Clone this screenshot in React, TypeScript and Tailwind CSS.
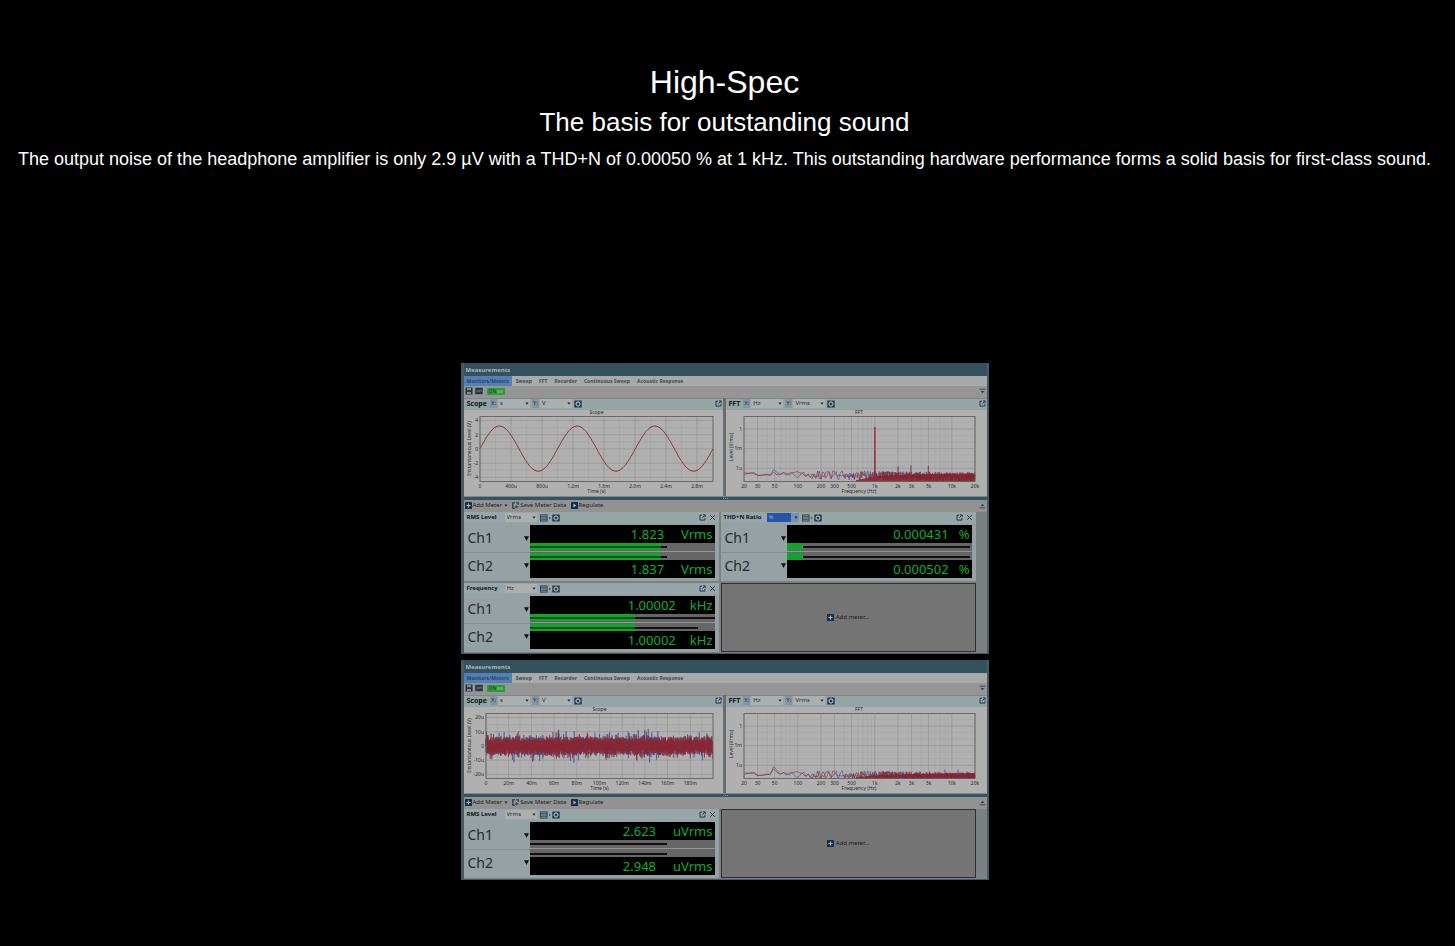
import React, { useId } from 'react';

const TABS = ['Monitors/Meters', 'Sweep', 'FFT', 'Recorder', 'Continuous Sweep', 'Acoustic Response'];

// small seeded generator so the traces are the same on every render
const createRandom = (seed: number) => {
  let s = seed;
  return () => {
    s = (s * 16807) % 2147483647;
    return s / 2147483647;
  };
};

const AXIS_FONT = 'fill-[#2b2b2b] text-[5px]';

const PlusIcon = () => (
  <svg viewBox="0 0 7 7" className="size-[7px] shrink-0">
    <rect width="7" height="7" rx="0.6" fill="#16304a" />
    <path d="M3.5 1.4v4.2M1.4 3.5h4.2" stroke="#a9b3b8" strokeWidth="1.2" />
  </svg>
);

const SaveDataIcon = () => (
  <svg viewBox="0 0 7 7" className="size-[7px] shrink-0" fill="none" stroke="#16304a">
    <path d="M3 .8H.8v5.4H3M4.2.8h2v2" strokeWidth="1.1" />
    <path d="M6.4 4.9H3.6M4.8 3.5 3.4 4.9l1.4 1.4" strokeWidth="0.9" />
  </svg>
);

const PlayIcon = () => (
  <svg viewBox="0 0 7 7" className="size-[7px] shrink-0">
    <rect width="7" height="7" rx="0.6" fill="#16304a" />
    <path d="M2.4 1.5 5.4 3.5l-3 2z" fill="#a9b3b8" />
  </svg>
);

const GearIcon = () => (
  <svg viewBox="0 0 8 8" className="size-[8px]">
    <rect x="0.3" y="0.5" width="7.4" height="7" rx="0.5" fill="#233848" />
    <circle cx="4" cy="4" r="1.9" fill="none" stroke="#a5b0b4" strokeWidth="1.1" />
    <path d="M4 1.2v1M4 5.8v1M1.2 4h1M5.8 4h1" stroke="#a5b0b4" strokeWidth="0.8" />
  </svg>
);

const ListIcon = () => (
  <svg viewBox="0 0 11 8" className="h-[8px] w-[11px]">
    <rect x="0.5" y="0.9" width="6.6" height="6.2" fill="#8d9ba0" stroke="#2b4050" strokeWidth="0.9" />
    <path d="M1 2.4h6M1 4h6M1 5.6h6" stroke="#2b4050" strokeWidth="0.7" />
    <path d="M8.6 3.6h2.2L9.7 4.9z" fill="#1d2c38" />
  </svg>
);

const PopOutIcon = () => (
  <svg viewBox="0 0 7 7" className="size-[7px]" fill="none" stroke="#26384c">
    <path d="M3 1.2H1v4.9h4.9V4" strokeWidth="1" />
    <path d="M4 .9h2.2v2.2M6 1.1 3.4 3.7" strokeWidth="1" />
  </svg>
);

const CloseIcon = () => (
  <svg viewBox="0 0 7 7" className="size-[7px]" stroke="#26323a" strokeWidth="1">
    <path d="m1.2 1.2 4.6 4.6M5.8 1.2 1.2 5.8" />
  </svg>
);

const DiskIcon = () => (
  <svg viewBox="0 0 8 8" className="size-[8px]">
    <path d="M.5.5h7v7h-7z" fill="#22323f" />
    <path d="M2 1h4v2.2H2zM2 5h4v2H2z" fill="#84898d" />
  </svg>
);

const CardIcon = () => (
  <svg viewBox="0 0 8 8" className="size-[8px]">
    <rect x="0.3" y="0.8" width="7.4" height="6.4" fill="#22323f" />
    <path d="M1.6 3.2h1.8v1.6H1.6M4.6 4.8V3.2h1.8v1.6" fill="none" stroke="#7c858b" strokeWidth="0.7" />
  </svg>
);

const CollapseIcon = ({ up = false }: { up?: boolean }) => (
  <svg viewBox="0 0 7 7" className={up ? 'size-[7px] rotate-180' : 'size-[7px]'}>
    <path d="M.6 1.2h5.8" stroke="#33414a" strokeWidth="0.9" />
    <path d="M1.6 2.9h3.8L3.5 5.3z" fill="#33414a" />
  </svg>
);

interface UnitSelectProps {
  id: string;
  value: string;
  active?: boolean;
}

const UnitSelect = ({ id, value, active }: UnitSelectProps) => (
  <div className="relative flex items-center">
    <select
      id={id}
      defaultValue={value}
      className={
        active
          ? 'h-[9px] w-[32px] appearance-none border-r-8 border-[#7591b5] bg-[#2357a6] pl-[2px] text-[6px] leading-[9px] text-[#8fb4e6]'
          : 'h-[9px] w-[32px] appearance-none bg-[#abafaf] pl-[2px] text-[6px] leading-[9px] text-[#2a2a2a]'
      }
    >
      <option>{value}</option>
    </select>
    <svg viewBox="0 0 4 3" className="pointer-events-none absolute right-px h-[3px] w-[4px]">
      <path d="M.4.5h3.2L2 2.7z" fill="#1d262b" />
    </svg>
  </div>
);

const AxisSelect = ({ label, value }: { label: string; value: string }) => {
  const id = useId();
  return (
    <div className="flex items-center gap-px">
      <label htmlFor={id} className="bg-[#8496a0] px-px text-[#27343b]">
        {label}
      </label>
      <UnitSelect id={id} value={value} />
    </div>
  );
};

const IconButton = ({ label, children }: { label: string; children: React.ReactNode }) => (
  <button type="button" aria-label={label} className="block">
    {children}
  </button>
);

interface GraphPaneProps {
  title: string;
  x: string;
  y: string;
  children: React.ReactNode;
}

const GraphPane = ({ title, x, y, children }: GraphPaneProps) => (
  <section className="min-w-0 bg-[#b0b0b0]">
    <header className="flex h-[12px] items-center gap-[2px] border-t border-[#7b8789] bg-[#96a4a6] pr-px pb-[2px] pl-[3px] text-[6px] leading-[9px]">
      <h3 className="pr-px text-[7px] font-bold text-[#0f1518]">{title}</h3>
      <AxisSelect label="X:" value={x} />
      <AxisSelect label="Y:" value={y} />
      <IconButton label="Graph settings">
        <GearIcon />
      </IconButton>
      <div className="ml-auto">
        <IconButton label="Pop out">
          <PopOutIcon />
        </IconButton>
      </div>
    </header>
    {children}
  </section>
);

interface ScopeGraphProps {
  left: number;
  yTicks: string[];
  xTicks: string[];
  xStep: number;
  children: React.ReactNode;
}

const TOP = 6.5;
const BOTTOM = 71.5;

const ScopeGraph = ({ left, yTicks, xTicks, xStep, children }: ScopeGraphProps) => (
  <svg viewBox="0 0 259 86" className="block w-full" role="img" aria-label="Scope">
    {xTicks.map((t, i) => (
      <g key={t}>
        <path d={`M${left + i * xStep} ${TOP}V${BOTTOM}`} stroke="#8e8e8e" strokeWidth="0.6" />
        <path d={`M${Math.min(left + (i + 0.5) * xStep, 249)} ${TOP}V${BOTTOM}`} stroke="#a2a2a2" strokeWidth="0.5" />
        <text x={left + i * xStep} y="78" textAnchor="middle" className={AXIS_FONT}>{t}</text>
      </g>
    ))}
    {yTicks.map((t, i) => (
      <g key={t}>
        <path d={`M${left} ${10.5 + i * 14.2}H249`} stroke="#8e8e8e" strokeWidth="0.6" />
        {i < yTicks.length - 1 && (
          <path d={`M${left} ${17.6 + i * 14.2}H249`} stroke="#a2a2a2" strokeWidth="0.5" />
        )}
        <text x={left - 2} y={12.3 + i * 14.2} textAnchor="end" className={AXIS_FONT}>{t}</text>
      </g>
    ))}
    <text x={(left + 249) / 2} y="4.3" textAnchor="middle" className={AXIS_FONT}>Scope</text>
    <text x={(left + 249) / 2} y="83" textAnchor="middle" className={AXIS_FONT}>Time (s)</text>
    <text transform="translate(7 38.5) rotate(-90)" textAnchor="middle" className={AXIS_FONT}>Instantaneous Level (V)</text>
    {children}
    <rect x={left} y={TOP} width={249 - left} height={BOTTOM - TOP} fill="none" stroke="#585858" strokeWidth="0.8" />
  </svg>
);

const sinePath = Array.from({ length: 234 }, (_, i) => {
  const y = 38.6 - 22.6 * Math.sin((i / 77.7) * Math.PI * 2);
  return `${i ? 'L' : 'M'}${16 + i} ${y.toFixed(2)}`;
}).join('');

const noisePath = (seed: number, base: number, spread: number) => {
  const rnd = createRandom(seed);
  let d = 'M22 39';
  for (let i = 0; i < 900; i++) {
    const peak = base * (0.4 + rnd() * 0.9) + Math.pow(rnd(), 9) * spread;
    d += `L${(22 + i * 0.252).toFixed(2)} ${(39 + (i % 2 ? peak : -peak)).toFixed(2)}`;
  }
  return d;
};

const freqX = (f: number) => 18 + 77 * Math.log10(f / 20);

const FREQ_TICKS: [number, string][] = [
  [20, '20'], [30, '30'], [50, '50'], [100, '100'], [200, '200'], [300, '300'], [500, '500'],
  [1000, '1k'], [2000, '2k'], [3000, '3k'], [5000, '5k'], [10000, '10k'], [20000, '20k'],
];

const FREQ_MINOR = [40, 60, 70, 80, 90, 400, 600, 700, 800, 900, 4000, 6000, 7000, 8000, 9000];

// noise floor gets denser and thicker towards the high frequencies
const floorPath = (seed: number, hump: number, floor: number) => {
  const rnd = createRandom(seed);
  let x = 18;
  let d = '';
  let i = 0;
  while (x < 249) {
    const t = (x - 18) / 231;
    const swing = 1.2 + Math.min(t * 9, 3.4);
    const bump = Math.abs(x - 48.6) < 6 ? hump * (1 - Math.abs(x - 48.6) / 6) : 0;
    const y = Math.min(floor + t * 3 + swing * (rnd() * 2 - 1) - bump, 71);
    d += `${i ? 'L' : 'M'}${x.toFixed(2)} ${y.toFixed(2)}`;
    x += Math.max(5 * Math.pow(1 - t, 2.8), 0.35);
    i++;
  }
  return d;
};

const FftGraph = ({ tone = false }: { tone?: boolean }) => {
  const top = tone ? 63.4 : 66;
  const start = tone ? 64 : 67;
  return (
    <svg viewBox="0 0 261 86" className="block w-full" role="img" aria-label="FFT">
      {FREQ_MINOR.map((f) => (
        <path key={f} d={`M${freqX(f)} ${TOP}V${BOTTOM}`} stroke="#a2a2a2" strokeWidth="0.5" />
      ))}
      {FREQ_TICKS.map(([f, t]) => (
        <g key={f}>
          <path d={`M${freqX(f)} ${TOP}V${BOTTOM}`} stroke="#8e8e8e" strokeWidth="0.6" />
          <text x={freqX(f)} y="78" textAnchor="middle" className={AXIS_FONT}>{t}</text>
        </g>
      ))}
      {['1', '1m', '1u'].map((t, i) => (
        <g key={t}>
          <path d={`M18 ${19 + i * 19.6}H249`} stroke="#8e8e8e" strokeWidth="0.6" />
          <path d={`M18 ${12.5 + i * 19.6}H249M18 ${25.5 + i * 19.6}H249`} stroke="#a5a5a5" strokeWidth="0.4" />
          <text x="16" y={20.8 + i * 19.6} textAnchor="end" className={AXIS_FONT}>{t}</text>
        </g>
      ))}
      <text x="133" y="4.3" textAnchor="middle" className={AXIS_FONT}>FFT</text>
      <text x="133" y="83" textAnchor="middle" className={AXIS_FONT}>Frequency (Hz)</text>
      <text transform="translate(7 37) rotate(-90)" textAnchor="middle" className={AXIS_FONT}>Level (Vrms)</text>
      <path d={floorPath(770077, tone ? 3.5 : 7, start)} fill="none" stroke="#4a4a7c" strokeWidth="0.6" />
      <path d={floorPath(12345678, tone ? 1 : 5, start)} fill="none" stroke="#8c2c38" strokeWidth="0.6" />
      <path d={`M130 70L155 ${top + 2}L200 ${top + 0.8}L249 ${top}V71.5H130Z`} fill="#86202c" opacity="0.85" />
      {tone ? (
        <>
          <path d="M147.4 70 148.4 62 148.6 17h.6l.2 45 1.2 8z" fill="#9a2733" stroke="#9a2733" strokeWidth="0.6" />
          <path d="M172 71V56.5M185 71V55.5M202.3 71V55.8" stroke="#7e2836" strokeWidth="0.9" />
        </>
      ) : (
        <path d="M219 69V62.5M232 69V62.5M241 69V64.5" stroke="#50407a" strokeWidth="0.7" />
      )}
      <rect x="18" y={TOP} width="231" height={BOTTOM - TOP} fill="none" stroke="#585858" strokeWidth="0.8" />
    </svg>
  );
};

const Bar = ({ fill, line, over }: { fill: number; line: number; over: boolean }) => (
  <div className="relative flex h-[7px] items-center bg-[#666666]">
    <div className="absolute inset-y-0 left-0 bg-[#12a52c]" style={{ width: `${fill}%` }} />
    <div
      className={over ? 'relative h-[2px] bg-[#101010]' : 'h-[2px] bg-[#101010]'}
      style={{ width: `${line}%` }}
    />
    {over && <div className="absolute left-0 h-[2px] bg-[#0a5419]" style={{ width: `${fill}%` }} />}
  </div>
);

interface MeterProps {
  title: string;
  selected: string;
  unit: string;
  values: [string, string];
  fill: number;
  lines: [number, number];
  percent?: boolean;
}

const Meter = ({ title, selected, unit, values, fill, lines, percent = false }: MeterProps) => {
  const id = useId();

  const reading = (value: string) => (
    <div
      className={`flex h-[18px] items-center justify-end bg-black pr-[2px] text-[13px] leading-[18px] text-[#0fae30] ${
        percent ? 'gap-[10px]' : unit === 'kHz' ? 'gap-[14px]' : 'gap-[17px]'
      }`}
    >
      <span>{value}</span>
      <span>{unit}</span>
    </div>
  );

  return (
    <section className="bg-[#96a1a3]">
      <header className="flex h-[11px] items-center gap-[3px] bg-[#98a6a8] pr-[3px] pl-[3px] text-[6px] leading-[9px]">
        <h3 className="min-w-[35px] pr-[2px] font-bold whitespace-nowrap text-[#0f1518]">
          <label htmlFor={id}>{title}</label>
        </h3>
        <UnitSelect id={id} value={selected} active={percent} />
        <div className="flex gap-px">
          <IconButton label="Meter view">
            <ListIcon />
          </IconButton>
          <IconButton label="Meter settings">
            <GearIcon />
          </IconButton>
        </div>
        <div className="ml-auto flex gap-[3px]">
          <IconButton label="Pop out">
            <PopOutIcon />
          </IconButton>
          <IconButton label="Close">
            <CloseIcon />
          </IconButton>
        </div>
      </header>
      <div className="flex h-[58px]">
        <div className="flex w-[66px] shrink-0 flex-col pb-[2px]">
          {['Ch1', 'Ch2'].map((ch, i) => (
            <button
              key={ch}
              type="button"
              className={`flex flex-1 items-center justify-between pr-px pl-[4px] text-[14px] leading-[20px] text-[#252b2d] ${
                i === 0 ? 'border-b border-[#848d8f] pt-[2px]' : ''
              }`}
            >
              {ch}
              <svg viewBox="0 0 5 5" className="size-[5px]">
                <path d="M0 .3h5L2.5 5z" fill="#0c0f10" />
              </svg>
            </button>
          ))}
        </div>
        <div className="mr-[4px] flex-1 pt-[2px]">
          {reading(values[0])}
          <Bar fill={fill} line={lines[0]} over={!percent} />
          <div className="flex h-[3px] items-center bg-[#666666]">
            <div className="h-px w-full bg-[#949494]" />
          </div>
          <Bar fill={fill} line={lines[1]} over={!percent} />
          {reading(values[1])}
        </div>
      </div>
    </section>
  );
};

const AddMeter = () => (
  <button
    type="button"
    className="flex h-[69px] items-center justify-center gap-[2px] border border-[#303030] bg-[#747474] text-[6px] text-[#1c1c1c]"
  >
    <PlusIcon />
    Add meter...
  </button>
);

interface MeasurementsProps {
  graphs: React.ReactNode;
  children: React.ReactNode;
}

const Measurements = ({ graphs, children }: MeasurementsProps) => (
  <article className="border-r-2 border-b border-l-3 border-[#465c64] bg-[#7b8183] font-['Noto_Sans','Open_Sans',sans-serif]">
    <h2 className="h-[13px] bg-[#34515e] pl-[2px] text-[6px] leading-[14px] font-bold text-[#aab5b9]">Measurements</h2>
    <nav className="flex h-[10px] gap-px bg-[#a9a9a9] text-[5px] leading-[10px] font-bold text-[#3a4c58]">
      {TABS.map((tab, i) => (
        <button
          key={tab}
          type="button"
          className={i === 0 ? 'bg-[#547fb4] px-[3px] text-[#23466e]' : 'px-[3px]'}
        >
          {tab}
        </button>
      ))}
    </nav>
    <div className="flex h-[12px] items-center gap-[2px] bg-[#959595] px-px pb-[2px]">
      <IconButton label="Save">
        <DiskIcon />
      </IconButton>
      <IconButton label="Data">
        <CardIcon />
      </IconButton>
      <button
        type="button"
        className="ml-[2px] flex h-[7px] items-center gap-px rounded-[1px] bg-[#2b9c39] px-[2px] text-[5px] leading-[7px] text-[#0b4a17]"
      >
        ON
        <span className="h-[3px] w-[6px] bg-[#5fae62]" />
      </button>
      <div className="ml-auto">
        <IconButton label="Collapse graphs">
          <CollapseIcon />
        </IconButton>
      </div>
    </div>
    <div className="grid grid-cols-[259fr_261fr] gap-[3px] bg-[#656d70]">{graphs}</div>
    <div className="flex h-[4px] items-center justify-center gap-px border-t border-[#7c8b90] bg-[#34545f]">
      <span className="size-px bg-[#7c949c]" />
      <span className="size-px bg-[#7c949c]" />
      <span className="size-px bg-[#7c949c]" />
    </div>
    <div className="flex h-[12px] items-center gap-[4px] bg-[#929292] px-px pb-[2px] text-[6px] leading-[10px] text-[#1b1f22]">
      <button type="button" className="flex items-center gap-px">
        <PlusIcon />
        Add Meter
        <svg viewBox="0 0 4 3" className="ml-px h-[3px] w-[4px]">
          <path d="M.4.5h3.2L2 2.7z" fill="#1d262b" />
        </svg>
      </button>
      <button type="button" className="flex items-center gap-px">
        <SaveDataIcon />
        Save Meter Data
      </button>
      <button type="button" className="flex items-center gap-px">
        <PlayIcon />
        Regulate
      </button>
      <div className="ml-auto">
        <IconButton label="Collapse meters">
          <CollapseIcon up />
        </IconButton>
      </div>
    </div>
    <div className="grid grid-cols-2 gap-[2px] pr-[11px] pb-px">{children}</div>
  </article>
);

const App: React.FC = () => {
  return (
    <main className="min-h-screen bg-black pt-[62px] pr-[6px] pb-[66px] text-center font-['Liberation_Sans',Arial,sans-serif] text-white">
      <h1 className="text-[32px] leading-[40px]">High-Spec</h1>
      <p className="text-[26px] leading-[40px]">The basis for outstanding sound</p>
      <p className="text-[18px] leading-[34px]">
        The output noise of the headphone amplifier is only 2.9 µV with a THD+N of 0.00050 % at 1 kHz. This outstanding
        hardware performance forms a solid basis for first-class sound.
      </p>

      <div className="mx-auto mt-[187px] flex w-full max-w-[528px] flex-col gap-[6px] text-left">
        <Measurements
          graphs={
            <>
              <GraphPane title="Scope" x="s" y="V">
                <ScopeGraph
                  left={16}
                  xStep={31}
                  xTicks={['0', '400u', '800u', '1.2m', '1.6m', '2.0m', '2.4m', '2.8m']}
                  yTicks={['4', '2', '0', '-2', '-4']}
                >
                  <path d={sinePath} fill="none" stroke="#8b3540" strokeWidth="1" />
                </ScopeGraph>
              </GraphPane>
              <GraphPane title="FFT" x="Hz" y="Vrms">
                <FftGraph tone />
              </GraphPane>
            </>
          }
        >
          <Meter title="RMS Level" selected="Vrms" unit="Vrms" values={['1.823', '1.837']} fill={71} lines={[74.5, 74.5]} />
          <Meter title="THD+N Ratio" selected="%" unit="%" values={['0.000431', '0.000502']} fill={8.7} lines={[99, 99]} percent />
          <Meter title="Frequency" selected="Hz" unit="kHz" values={['1.00002', '1.00002']} fill={57} lines={[100, 91]} />
          <AddMeter />
        </Measurements>

        <Measurements
          graphs={
            <>
              <GraphPane title="Scope" x="s" y="V">
                <ScopeGraph
                  left={22}
                  xStep={22.7}
                  xTicks={['0', '20m', '40m', '60m', '80m', '100m', '120m', '140m', '160m', '180m']}
                  yTicks={['20u', '10u', '0', '-10u', '-20u']}
                >
                  <path d={noisePath(424242, 7, 9)} fill="none" stroke="#3f3f7e" strokeWidth="0.5" />
                  <path d={noisePath(9919191, 7, 6)} fill="none" stroke="#8c2630" strokeWidth="0.6" />
                </ScopeGraph>
              </GraphPane>
              <GraphPane title="FFT" x="Hz" y="Vrms">
                <FftGraph />
              </GraphPane>
            </>
          }
        >
          <Meter title="RMS Level" selected="Vrms" unit="uVrms" values={['2.623', '2.948']} fill={0} lines={[74.5, 74.5]} />
          <AddMeter />
        </Measurements>
      </div>
    </main>
  );
};

export default App;
